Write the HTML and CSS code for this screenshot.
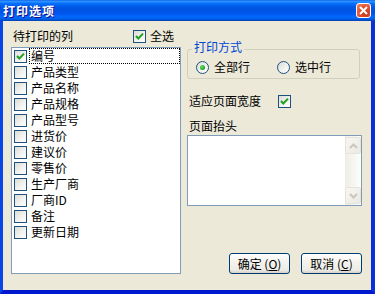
FILE: index.html
```html
<!DOCTYPE html>
<html lang="zh-CN">
<head>
    <meta charset="UTF-8">
    <title>打印选项</title>
    <link rel="stylesheet" href="styles.css">
</head>
<body>
    <div class="window">
        <div class="titlebar">
            <span class="title">打印选项</span>
            <span class="close">
                <svg width="9" height="9" viewBox="0 0 9 9"><path d="M1 1 L8 8 M8 1 L1 8" stroke="#fff" stroke-width="2"/></svg>
            </span>
        </div>

        <div class="panel">
            <div class="col-left">
                <div class="list-head">
                    <span>待打印的列</span>
                    <span class="check-all"><span class="box"><svg viewBox="0 0 11 11"><path d="M2 5 L4.3 7.5 L9 2.6" fill="none" stroke="#21a121" stroke-width="2"/></svg></span>全选</span>
                </div>
                <ul class="list">
                    <li><span class="box"><svg viewBox="0 0 11 11"><path d="M2 5 L4.3 7.5 L9 2.6" fill="none" stroke="#21a121" stroke-width="2"/></svg></span><span class="item focus">编号</span></li>
                    <li><span class="box"></span><span class="item">产品类型</span></li>
                    <li><span class="box"></span><span class="item">产品名称</span></li>
                    <li><span class="box"></span><span class="item">产品规格</span></li>
                    <li><span class="box"></span><span class="item">产品型号</span></li>
                    <li><span class="box"></span><span class="item">进货价</span></li>
                    <li><span class="box"></span><span class="item">建议价</span></li>
                    <li><span class="box"></span><span class="item">零售价</span></li>
                    <li><span class="box"></span><span class="item">生产厂商</span></li>
                    <li><span class="box"></span><span class="item">厂商ID</span></li>
                    <li><span class="box"></span><span class="item">备注</span></li>
                    <li><span class="box"></span><span class="item">更新日期</span></li>
                </ul>
            </div>

            <div class="col-right">
                <fieldset class="group">
                    <legend>打印方式</legend>
                    <span class="radio"><span class="dot on"></span>全部行</span>
                    <span class="radio"><span class="dot"></span>选中行</span>
                </fieldset>

                <div class="fit-row">
                    <span>适应页面宽度</span>
                    <span class="box"><svg viewBox="0 0 11 11"><path d="M2 5 L4.3 7.5 L9 2.6" fill="none" stroke="#21a121" stroke-width="2"/></svg></span>
                </div>

                <div class="caption">页面抬头</div>
                <div class="textarea">
                    <div class="scrollbar">
                        <span class="sb-btn"><svg width="9" height="6" viewBox="0 0 9 6"><path d="M1 5 L4.5 1.5 L8 5" fill="none" stroke="#c9c7ba" stroke-width="2"/></svg></span>
                        <span class="sb-btn"><svg width="9" height="6" viewBox="0 0 9 6"><path d="M1 1 L4.5 4.5 L8 1" fill="none" stroke="#c9c7ba" stroke-width="2"/></svg></span>
                    </div>
                </div>

                <div class="buttons">
                    <button class="btn">确定 (<u>O</u>)</button>
                    <button class="btn">取消 (<u>C</u>)</button>
                </div>
            </div>
        </div>
    </div>
</body>
</html>
```

FILE: styles.css
```css
body {
    margin: 0;
    font-family: "Noto Sans CJK SC", "DejaVu Sans", sans-serif;
    font-size: 12px;
    color: #000;
}
.window {
    width: 375px;
    height: 294px;
    display: flex;
    flex-direction: column;
}
.titlebar {
    height: 21px;
    flex: none;
    display: flex;
    align-items: center;
    padding: 0 4px 0 3px;
    background: linear-gradient(to bottom, #0058ee 0%, #3593ff 5%, #288eff 9%, #127dff 13%, #036ffc 17%, #0262ee 25%, #0057e5 35%, #0054e3 45%, #0055eb 60%, #005bf5 70%, #026afe 80%, #0062ef 88%, #0052d6 94%, #0040ab 100%);
}
.title {
    flex: 1;
    color: #fff;
    font-weight: bold;
    font-size: 12px;
    letter-spacing: 1px;
    line-height: 14px;
    text-shadow: 1px 1px #0f1089;
}
.close {
    width: 13px;
    height: 13px;
    display: flex;
    align-items: center;
    justify-content: center;
    border: 1px solid #fff;
    border-radius: 3px;
    background: radial-gradient(circle at 70% 75%, #c7381a 0%, #e0502f 50%, #ec8a6c 100%);
}
.close svg {
    display: block;
}
.panel {
    flex: 1;
    display: flex;
    gap: 6px;
    padding: 7px 9px 16px 8px;
    background: #ece9d8;
    border-style: solid;
    border-width: 0 4px 4px 3px;
    border-color: #0831d9 #0831d9 #0019cf #0a45e8;
}
.col-left {
    width: 170px;
    display: flex;
    flex-direction: column;
}
.list-head {
    height: 16px;
    display: flex;
    align-items: center;
    padding: 0 7px 0 2px;
    line-height: 14px;
}
.check-all {
    margin-left: auto;
    display: flex;
    align-items: center;
    gap: 4px;
}
.box {
    width: 11px;
    height: 11px;
    flex: none;
    border: 1px solid #1c5180;
    background: linear-gradient(135deg, #dcdcd7 0%, #f3f3f0 60%, #fff 100%);
}
.box svg {
    display: block;
    width: 11px;
    height: 11px;
}
.list {
    flex: 1;
    margin: 3px 0 0;
    padding: 0 0 0 2px;
    list-style: none;
    background: #fff;
    border: 1px solid #7f9db9;
}
.list li {
    height: 16px;
    display: flex;
    align-items: center;
}
.item {
    flex: 1;
    height: 16px;
    box-sizing: border-box;
    margin-left: 2px;
    padding: 0 1px;
    line-height: 14px;
    border: 1px dotted transparent;
}
.item.focus {
    border-color: #000;
}
.col-right {
    width: 175px;
    display: flex;
    flex-direction: column;
}
.group {
    margin: 13px 2px 0 0;
    padding: 2px 0 4px 8px;
    border: 1px solid #d0d0bf;
    border-radius: 3px;
    display: flex;
}
.group legend {
    margin-left: -4px;
    padding: 0 2px 5px;
    line-height: 12px;
    color: #0046d5;
}
.radio {
    width: 81px;
    height: 14px;
    display: flex;
    align-items: center;
    line-height: 14px;
}
.dot {
    width: 11px;
    height: 11px;
    margin-right: 5px;
    border: 1px solid #1c5180;
    border-radius: 50%;
    background: linear-gradient(135deg, #dcdcd7 0%, #f3f3f0 60%, #fff 100%);
    display: flex;
    align-items: center;
    justify-content: center;
}
.dot.on::after {
    content: "";
    width: 5px;
    height: 5px;
    border-radius: 50%;
    background: radial-gradient(circle at 35% 35%, #5ee05e, #21a121 70%);
}
.fit-row {
    margin-top: 15px;
    height: 14px;
    display: flex;
    align-items: center;
    gap: 17px;
    padding-left: 2px;
    line-height: 14px;
}
.caption {
    margin-top: 11px;
    padding-left: 2px;
    line-height: 14px;
}
.textarea {
    margin-top: 2px;
    height: 69px;
    display: flex;
    justify-content: flex-end;
    background: #fff;
    border: 1px solid #7f9db9;
}
.scrollbar {
    width: 16px;
    display: flex;
    flex-direction: column;
    justify-content: space-between;
    background: linear-gradient(to right, #eeede5, #fdfdfa);
}
.sb-btn {
    height: 15px;
    margin: 1px 0;
    display: flex;
    align-items: center;
    justify-content: center;
    border: 1px solid #e6e4da;
    border-radius: 2px;
    background: linear-gradient(135deg, #f7f6f3, #ebe9e2);
}
.buttons {
    margin-top: auto;
    display: flex;
    justify-content: flex-end;
    gap: 11px;
}
.btn {
    width: 61px;
    height: 21px;
    padding: 0;
    font-family: inherit;
    font-size: 12px;
    line-height: 14px;
    color: #000;
    border: 1px solid #003c74;
    border-radius: 3px;
    background: linear-gradient(to bottom, #fff 0%, #f4f3ee 40%, #ecebe6 85%, #d6d0c5 100%);
}
```
